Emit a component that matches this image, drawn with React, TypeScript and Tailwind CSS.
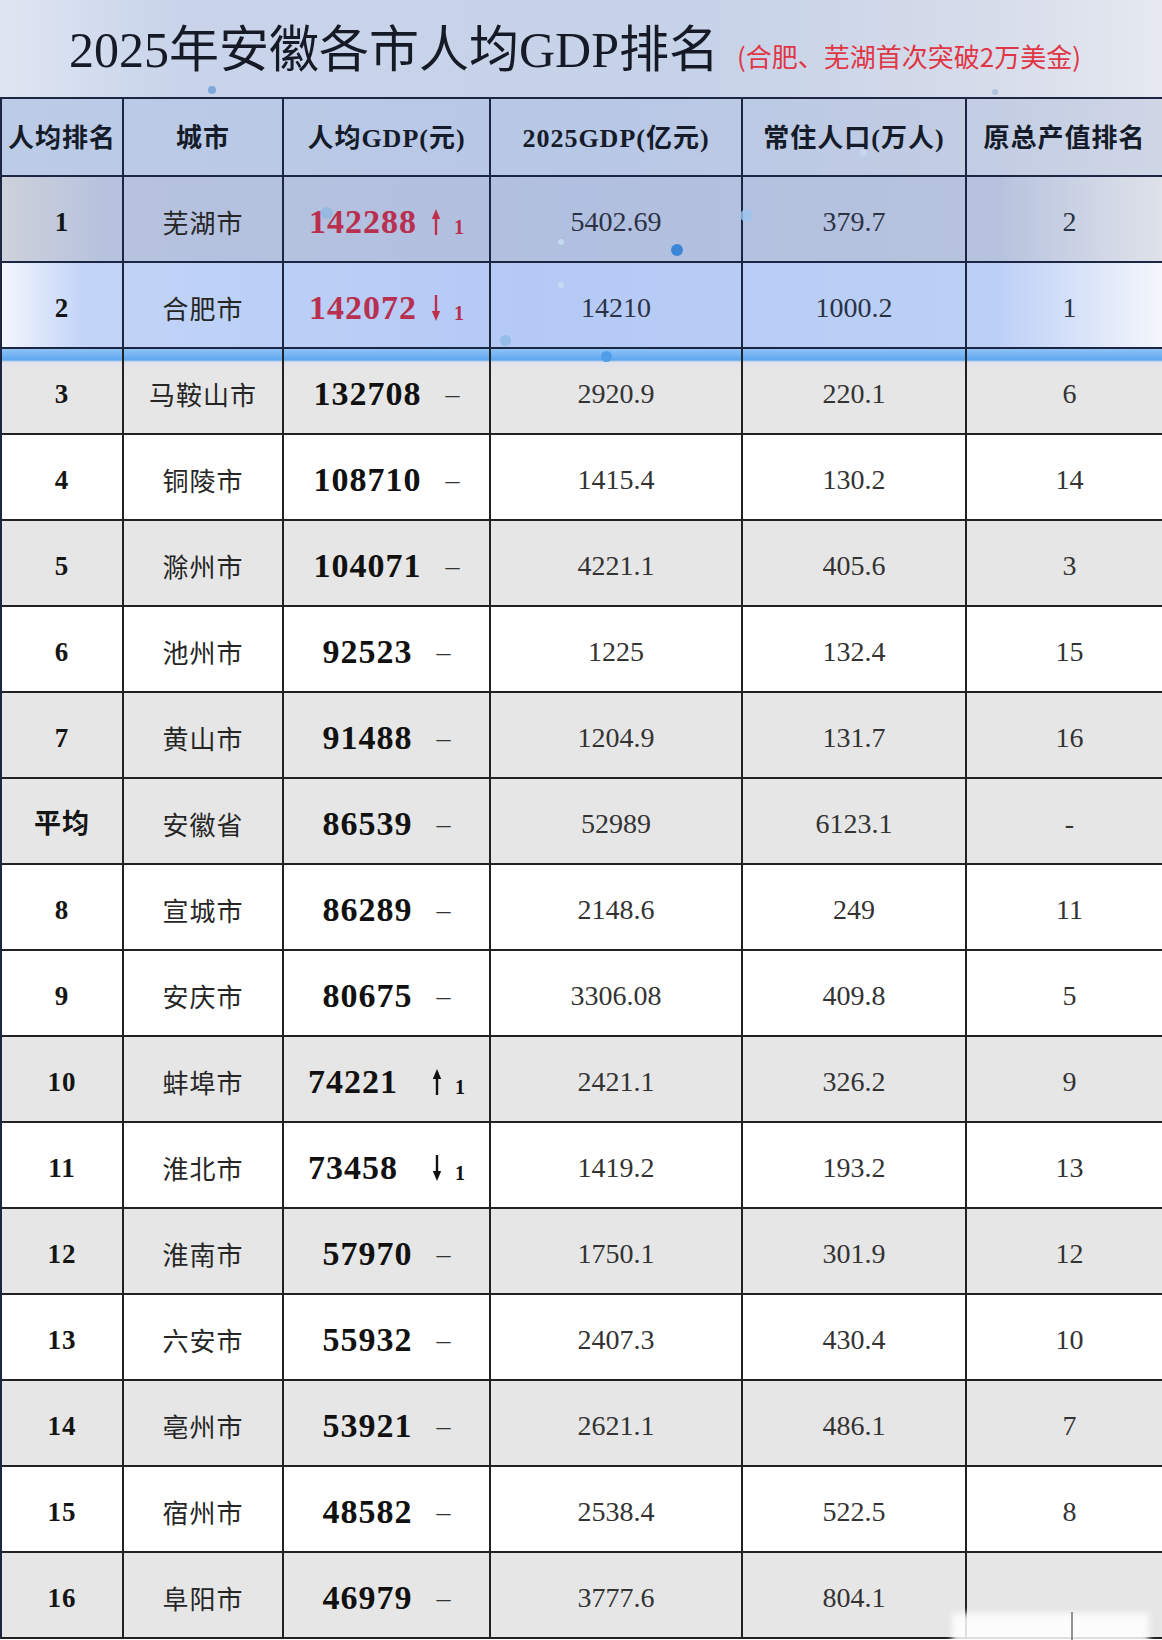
import React from 'react';

type Mark = 'up' | 'down' | 'dash';
type Tone = 'first' | 'second' | 'band' | 'gray' | 'white';

interface Row {
  rank: string;
  city: string;
  perCapita: string;
  mark: Mark;
  gdp: string;
  pop: string;
  orig: string;
  tone: Tone;
}

const rows: Row[] = [
  { rank: '1', city: '芜湖市', perCapita: '142288', mark: 'up', gdp: '5402.69', pop: '379.7', orig: '2', tone: 'first' },
  { rank: '2', city: '合肥市', perCapita: '142072', mark: 'down', gdp: '14210', pop: '1000.2', orig: '1', tone: 'second' },
  { rank: '3', city: '马鞍山市', perCapita: '132708', mark: 'dash', gdp: '2920.9', pop: '220.1', orig: '6', tone: 'band' },
  { rank: '4', city: '铜陵市', perCapita: '108710', mark: 'dash', gdp: '1415.4', pop: '130.2', orig: '14', tone: 'white' },
  { rank: '5', city: '滁州市', perCapita: '104071', mark: 'dash', gdp: '4221.1', pop: '405.6', orig: '3', tone: 'gray' },
  { rank: '6', city: '池州市', perCapita: '92523', mark: 'dash', gdp: '1225', pop: '132.4', orig: '15', tone: 'white' },
  { rank: '7', city: '黄山市', perCapita: '91488', mark: 'dash', gdp: '1204.9', pop: '131.7', orig: '16', tone: 'gray' },
  { rank: '平均', city: '安徽省', perCapita: '86539', mark: 'dash', gdp: '52989', pop: '6123.1', orig: '-', tone: 'gray' },
  { rank: '8', city: '宣城市', perCapita: '86289', mark: 'dash', gdp: '2148.6', pop: '249', orig: '11', tone: 'white' },
  { rank: '9', city: '安庆市', perCapita: '80675', mark: 'dash', gdp: '3306.08', pop: '409.8', orig: '5', tone: 'white' },
  { rank: '10', city: '蚌埠市', perCapita: '74221', mark: 'up', gdp: '2421.1', pop: '326.2', orig: '9', tone: 'gray' },
  { rank: '11', city: '淮北市', perCapita: '73458', mark: 'down', gdp: '1419.2', pop: '193.2', orig: '13', tone: 'white' },
  { rank: '12', city: '淮南市', perCapita: '57970', mark: 'dash', gdp: '1750.1', pop: '301.9', orig: '12', tone: 'gray' },
  { rank: '13', city: '六安市', perCapita: '55932', mark: 'dash', gdp: '2407.3', pop: '430.4', orig: '10', tone: 'white' },
  { rank: '14', city: '亳州市', perCapita: '53921', mark: 'dash', gdp: '2621.1', pop: '486.1', orig: '7', tone: 'gray' },
  { rank: '15', city: '宿州市', perCapita: '48582', mark: 'dash', gdp: '2538.4', pop: '522.5', orig: '8', tone: 'white' },
  { rank: '16', city: '阜阳市', perCapita: '46979', mark: 'dash', gdp: '3777.6', pop: '804.1', orig: '', tone: 'gray' },
];

const toneClass: Record<Tone, string> = {
  first: 'bg-[linear-gradient(90deg,#cdd1da_0%,#b6c2de_9%,#b1bfe0_50%,#b7c3de_86%,#dfe2ea_100%)]',
  second: 'bg-[linear-gradient(90deg,#f3f6fe_0%,#c2d4f7_7%,#b4c9f5_45%,#bdd0f6_86%,#f4f6fc_100%)]',
  band: 'bg-[linear-gradient(180deg,#8ec2f6_0px,#5fa8f0_11px,#dfe3ea_13px,#e6e6e6_22px)]',
  gray: 'bg-[#e6e6e6]',
  white: 'bg-white',
};

const grid = 'grid grid-cols-[122px_160px_207px_252px_224px_195px]';

function Arrow({ dir, color }: { dir: 'up' | 'down'; color: string }) {
  return (
    <svg width="10" height="26" viewBox="0 0 10 26" className="block shrink-0">
      {dir === 'up' ? (
        <>
          <path d="M5 8 V26" stroke={color} strokeWidth="2.4" />
          <path d="M0.8 10 L5 0 L9.2 10 Z" fill={color} />
        </>
      ) : (
        <>
          <path d="M5 0 V18" stroke={color} strokeWidth="2.4" />
          <path d="M0.8 16 L5 26 L9.2 16 Z" fill={color} />
        </>
      )}
    </svg>
  );
}

function PerCapita({ value, mark, red }: { value: string; mark: Mark; red: boolean }) {
  return (
    <div className={`flex items-center justify-center ${red ? 'text-[#b8304f]' : 'text-[#111]'}`}>
      <span className="text-[34px] font-bold leading-none tracking-[1px]">{value}</span>
      {mark === 'dash' ? (
        <span className="ml-[24px] text-[28px] font-normal leading-none text-[#333]">–</span>
      ) : (
        <span className={`flex items-end ${red ? 'ml-[14px]' : 'ml-[34px]'}`}>
          <Arrow dir={mark} color={red ? '#bf2f4c' : '#111'} />
          <span className="ml-[13px] text-[20px] font-bold leading-[15px]">1</span>
        </span>
      )}
    </div>
  );
}

function DataRow({ row }: { row: Row }) {
  const top = row.tone === 'first' || row.tone === 'second';
  const border = top ? 'border-[#1c2642]' : 'border-[#222]';
  const cell = `flex items-center justify-center pt-[6px] border-b-2 border-r-2 ${border}`;
  const value = `text-[28px] leading-none ${top ? 'text-[#2b3244]' : 'text-[#333]'}`;

  return (
    <div className={`${grid} h-[86px] ${toneClass[row.tone]}`}>
      <div className={cell}>
        <span className="text-[27px] font-bold leading-none tracking-[1px] text-[#151515]">{row.rank}</span>
      </div>
      <div className={cell}>
        <span className="font-['Noto_Sans_CJK_SC',sans-serif] text-[26px] leading-none tracking-[1px] text-[#262626]">
          {row.city}
        </span>
      </div>
      <div className={cell}>
        <PerCapita value={row.perCapita} mark={row.mark} red={top} />
      </div>
      <div className={cell}>
        <span className={value}>{row.gdp}</span>
      </div>
      <div className={cell}>
        <span className={value}>{row.pop}</span>
      </div>
      <div className={`flex items-center justify-center pl-[10px] pt-[6px] border-b-2 ${border}`}>
        <span className={value}>{row.orig}</span>
      </div>
    </div>
  );
}

const headers = ['人均排名', '城市', '人均GDP(元)', '2025GDP(亿元)', '常住人口(万人)', '原总产值排名'];

const dots = [
  { x: 212, y: 90, s: 8, c: 'bg-[#7fa9da]' },
  { x: 327, y: 213, s: 12, c: 'bg-[#8fb6e2]/80' },
  { x: 746, y: 215, s: 13, c: 'bg-[#9cc4ec]/80' },
  { x: 677, y: 250, s: 12, c: 'bg-[#3c86d8]' },
  { x: 561, y: 242, s: 6, c: 'bg-[#c4daf2]' },
  { x: 561, y: 285, s: 6, c: 'bg-[#c4daf2]' },
  { x: 505, y: 340, s: 11, c: 'bg-[#8cbce8]/80' },
  { x: 606, y: 356, s: 11, c: 'bg-[#4f9de8]' },
  { x: 863, y: 152, s: 7, c: 'bg-[#c8d8ee]' },
  { x: 995, y: 92, s: 6, c: 'bg-[#b3c4de]' },
];

export default function App() {
  return (
    <div className="relative h-[1640px] w-[1162px] overflow-hidden bg-white font-['Liberation_Serif','Noto_Sans_CJK_SC',serif]">
      <div className="flex h-[97px] items-baseline bg-[linear-gradient(90deg,#dfe6f3_0%,#c9d4ea_15%,#c6d2e8_60%,#d6dcea_85%,#e6e9f0_100%)] pl-[69px] pt-[25px]">
        <h1 className="text-[50px] font-normal leading-none text-[#151a26]">2025年安徽各市人均GDP排名</h1>
        <span className="ml-[18px] font-['Noto_Sans_CJK_SC',sans-serif] text-[26px] leading-none text-[#e03545]">
          (合肥、芜湖首次突破2万美金)
        </span>
      </div>

      <div className="border-l-2 border-t-2 border-[#1c2642]">
        <div className={`${grid} h-[78px] bg-[linear-gradient(90deg,#bccbe6_0%,#b7c7e6_50%,#c3cde3_85%,#cfd6e6_100%)]`}>
          {headers.map((h, i) => (
            <div
              key={h}
              className={`flex items-center justify-center pt-[4px] border-b-2 border-[#1c2642] ${i < 5 ? 'border-r-2' : ''}`}
            >
              <span className="text-[26px] font-bold leading-none tracking-[1px] text-[#151b29]">{h}</span>
            </div>
          ))}
        </div>
        {rows.map((row) => (
          <DataRow key={row.rank} row={row} />
        ))}
      </div>

      {dots.map((d, i) => (
        <span
          key={i}
          className={`absolute rounded-full ${d.c}`}
          style={{ left: d.x - d.s / 2, top: d.y - d.s / 2, width: d.s, height: d.s }}
        />
      ))}

      {/* watermark over the last cell */}
      <div className="absolute left-[952px] top-[1613px] h-[40px] w-[197px] bg-white/85 blur-[3px]" />
      <div className="absolute left-[1071px] top-[1612px] h-[28px] w-[2px] bg-[#666]/70" />
    </div>
  );
}
